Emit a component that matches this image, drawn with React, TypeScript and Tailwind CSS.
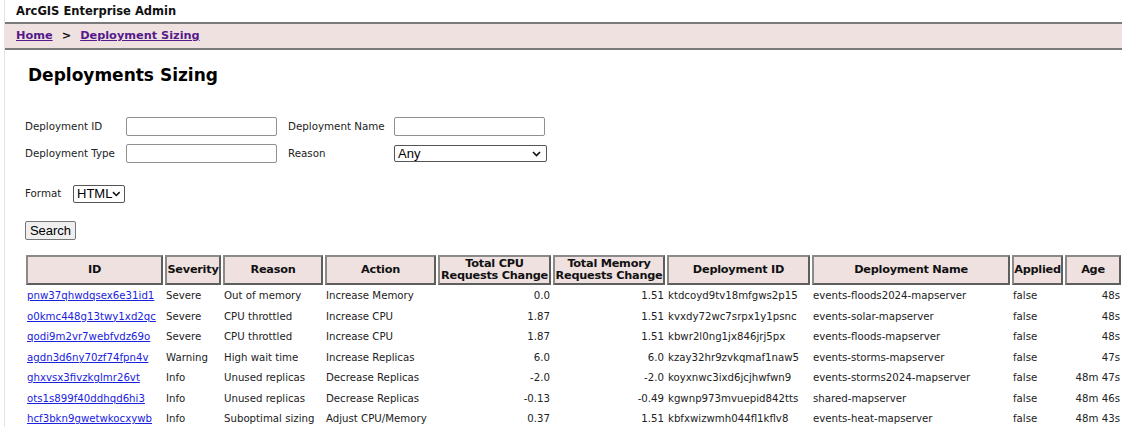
import React from 'react';

interface Row {
  id: string;
  severity: string;
  reason: string;
  action: string;
  cpu: string;
  mem: string;
  depId: string;
  depName: string;
  applied: string;
  age: string;
}

const rows: Row[] = [
  { id: 'pnw37qhwdqsex6e31id1', severity: 'Severe', reason: 'Out of memory', action: 'Increase Memory', cpu: '0.0', mem: '1.51', depId: 'ktdcoyd9tv18mfgws2p15', depName: 'events-floods2024-mapserver', applied: 'false', age: '48s' },
  { id: 'o0kmc448g13twy1xd2qc', severity: 'Severe', reason: 'CPU throttled', action: 'Increase CPU', cpu: '1.87', mem: '1.51', depId: 'kvxdy72wc7srpx1y1psnc', depName: 'events-solar-mapserver', applied: 'false', age: '48s' },
  { id: 'qodi9m2vr7webfvdz69o', severity: 'Severe', reason: 'CPU throttled', action: 'Increase CPU', cpu: '1.87', mem: '1.51', depId: 'kbwr2l0ng1jx846jrj5px', depName: 'events-floods-mapserver', applied: 'false', age: '48s' },
  { id: 'agdn3d6ny70zf74fpn4v', severity: 'Warning', reason: 'High wait time', action: 'Increase Replicas', cpu: '6.0', mem: '6.0', depId: 'kzay32hr9zvkqmaf1naw5', depName: 'events-storms-mapserver', applied: 'false', age: '47s' },
  { id: 'ghxvsx3fivzkglmr26vt', severity: 'Info', reason: 'Unused replicas', action: 'Decrease Replicas', cpu: '-2.0', mem: '-2.0', depId: 'koyxnwc3ixd6jcjhwfwn9', depName: 'events-storms2024-mapserver', applied: 'false', age: '48m 47s' },
  { id: 'ots1s899f40ddhqd6hi3', severity: 'Info', reason: 'Unused replicas', action: 'Decrease Replicas', cpu: '-0.13', mem: '-0.49', depId: 'kgwnp973mvuepid842tts', depName: 'shared-mapserver', applied: 'false', age: '48m 46s' },
  { id: 'hcf3bkn9gwetwkocxywb', severity: 'Info', reason: 'Suboptimal sizing', action: 'Adjust CPU/Memory', cpu: '0.37', mem: '1.51', depId: 'kbfxwizwmh044fl1kflv8', depName: 'events-heat-mapserver', applied: 'false', age: '48m 43s' },
];

const Chevron: React.FC = () => (
  <svg width="9" height="6" viewBox="0 0 9 6" className="pointer-events-none">
    <path d="M1 1 L4.5 4.5 L8 1" fill="none" stroke="#111" strokeWidth="1.6" />
  </svg>
);

const th =
  'bg-[#f0e1e1] border-2 border-t-[#8a8a8a] border-l-[#8a8a8a] border-b-[#5e5e5e] border-r-[#5e5e5e] text-[11.3px] tracking-[-0.25px] font-bold leading-[12px] text-[#111] text-center p-0 whitespace-nowrap overflow-hidden';
const td = 'px-[1px] h-[18.5px] leading-[18px] whitespace-nowrap overflow-hidden';
const input = 'w-[151px] h-[19px] border border-[#8f8f8f] rounded-[2px] bg-white';

const App: React.FC = () => {
  return (
    <div className="min-h-[427px] bg-white font-['DejaVu_Sans',Verdana,sans-serif] text-[#222]">
      <div className="ml-[4px] border-l border-[#e4e4e4] min-h-[427px]">
        <div className="h-[22px] flex items-center pt-[1px] pl-[11px] text-[11.5px] font-bold text-[#111]">
          ArcGIS Enterprise Admin
        </div>
        <div className="h-[28px] bg-[#f0e1e1] border-t-2 border-b-2 border-[#7a7a7a] flex items-center pl-[11px] text-[11.3px] font-bold">
          <a href="#" className="text-[#551a8b] underline">Home</a>
          <span className="mx-[9px] text-[#111]">&gt;</span>
          <a href="#" className="text-[#551a8b] underline">Deployment Sizing</a>
        </div>

        <h1 className="mt-[13px] ml-[23px] text-[17px] font-bold text-black leading-[24px]">Deployments Sizing</h1>

        <div className="mt-[30px] ml-[20px] text-[10.3px] text-[#222]">
          <div className="flex items-center h-[19px]">
            <span className="w-[101px]">Deployment ID</span>
            <input className={input} />
            <span className="ml-[11px] w-[106px]">Deployment Name</span>
            <input className={input} />
          </div>
          <div className="flex items-center h-[19px] mt-[8px]">
            <span className="w-[101px]">Deployment Type</span>
            <input className={input} />
            <span className="ml-[11px] w-[106px]">Reason</span>
            <div className="w-[153px] h-[17px] border border-[#555] rounded-[2px] bg-white flex items-center justify-between pl-[3px] pr-[5px] font-['Liberation_Sans',Arial,sans-serif] text-[13px] text-black">
              <span>Any</span>
              <Chevron />
            </div>
          </div>

          <div className="flex items-center h-[18px] mt-[22px]">
            <span className="w-[48px]">Format</span>
            <div className="w-[52px] h-[18px] border border-[#555] rounded-[2px] bg-white flex items-center justify-between pl-[3px] pr-[3px] font-['Liberation_Sans',Arial,sans-serif] text-[13px] text-black">
              <span>HTML</span>
              <Chevron />
            </div>
          </div>

          <button className="mt-[18px] w-[51px] h-[19px] border border-[#767676] rounded-[2px] bg-[#efefef] font-['Liberation_Sans',Arial,sans-serif] text-[13px] text-black leading-none">
            Search
          </button>
        </div>

        <table className="mt-[13px] ml-[19px] border-separate border-spacing-[2px] text-[10.2px] text-[#222] table-fixed w-[1099px]">
          <thead>
            <tr className="h-[30px]">
              <th className={`${th} w-[137px]`}>ID</th>
              <th className={`${th} w-[56px]`}>Severity</th>
              <th className={`${th} w-[100px]`}>Reason</th>
              <th className={`${th} w-[111px]`}>Action</th>
              <th className={`${th} w-[113px]`}>Total CPU<br />Requests Change</th>
              <th className={`${th} w-[112px]`}>Total Memory<br />Requests Change</th>
              <th className={`${th} w-[143px]`}>Deployment ID</th>
              <th className={`${th} w-[198px]`}>Deployment Name</th>
              <th className={`${th} w-[51px]`}>Applied</th>
              <th className={`${th} w-[56px]`}>Age</th>
            </tr>
          </thead>
          <tbody>
            {rows.map((r) => (
              <tr key={r.id}>
                <td className={td}>
                  <a href="#" className="text-[#1a22dd] underline">{r.id}</a>
                </td>
                <td className={td}>{r.severity}</td>
                <td className={td}>{r.reason}</td>
                <td className={td}>{r.action}</td>
                <td className={`${td} text-right`}>{r.cpu}</td>
                <td className={`${td} text-right`}>{r.mem}</td>
                <td className={td}>{r.depId}</td>
                <td className={td}>{r.depName}</td>
                <td className={td}>{r.applied}</td>
                <td className={`${td} text-right`}>{r.age}</td>
              </tr>
            ))}
          </tbody>
        </table>
      </div>
    </div>
  );
};

export default App;
